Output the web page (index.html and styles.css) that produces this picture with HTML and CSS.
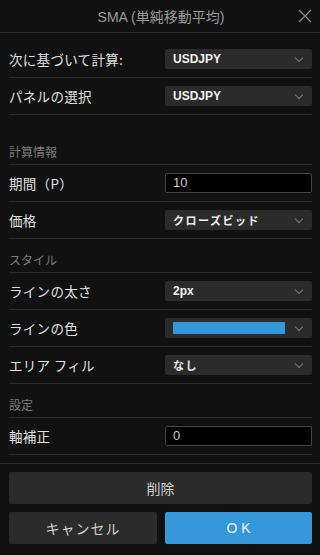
FILE: index.html
```html
<!DOCTYPE html>
<html lang="ja">
<head>
    <meta charset="UTF-8">
    <meta name="viewport" content="width=device-width, initial-scale=1.0">
    <title>SMA (単純移動平均)</title>
    <link rel="stylesheet" href="styles.css">
</head>
<body>
    <div class="kopf">
        <span class="titel">SMA (単純移動平均)</span>
        <svg class="zu" width="14" height="14" viewBox="0 0 14 14"><path d="M1 1L13 13M13 1L1 13" stroke="#8a8a8a" stroke-width="1.3" fill="none"/></svg>
    </div>
    <div class="inhalt">
        <div class="zeile">
            <label>次に基づいて計算:</label>
            <div class="wahl"><span class="fett">USDJPY</span><i class="pfeil"></i></div>
        </div>
        <div class="zeile">
            <label>パネルの選択</label>
            <div class="wahl"><span class="fett">USDJPY</span><i class="pfeil"></i></div>
        </div>
        <div class="abschnitt erster">計算情報</div>
        <div class="zeile">
            <label>期間（P）</label>
            <div class="feld">10</div>
        </div>
        <div class="zeile">
            <label>価格</label>
            <div class="wahl"><span class="jp">クローズビッド</span><i class="pfeil"></i></div>
        </div>
        <div class="abschnitt">スタイル</div>
        <div class="zeile">
            <label>ラインの太さ</label>
            <div class="wahl"><span class="fett">2px</span><i class="pfeil"></i></div>
        </div>
        <div class="zeile">
            <label>ラインの色</label>
            <div class="wahl"><span class="farbe"></span><i class="pfeil"></i></div>
        </div>
        <div class="zeile">
            <label>エリア フィル</label>
            <div class="wahl"><span class="jp">なし</span><i class="pfeil"></i></div>
        </div>
        <div class="abschnitt">設定</div>
        <div class="zeile">
            <label>軸補正</label>
            <div class="feld">0</div>
        </div>
    </div>
    <div class="fuss">
        <button class="knopf loeschen">削除</button>
        <div class="paar">
            <button class="knopf abbrechen">キャンセル</button>
            <button class="knopf ok">OK</button>
        </div>
    </div>
</body>
</html>
```

FILE: styles.css
```css
body{
    margin:0;
    background:#111111;
    font-family: "Noto Sans CJK JP", "Liberation Sans", sans-serif;
    color:#dedede;
    width:320px;
    height:555px;
    overflow:hidden;
}
.kopf{
    position: relative;
    height:32px;
    border-bottom:1px solid #2a2a2a;
    display:flex;
    align-items:center;
    justify-content:center;
}
.titel{
    font-family: "Liberation Sans", "Noto Sans CJK JP", sans-serif;
    font-size:14px;
    color:#9a9a9a;
    margin-left:2px;
}
.zu{
    position:absolute;
    right:8px;
    top:9px;
}
.inhalt{
    padding:8px 8px 8px 9px;
    border-bottom:1px solid #2a2a2a;
}
.zeile{
    display:flex;
    align-items:center;
    padding:8px 0;
    border-bottom:1px solid #2a2a2a;
}
label{
    width:156px;
    font-size:13.5px;
    line-height:20px;
    color:#e0e0e0;
    letter-spacing:0.3px;
}
.wahl{
    width:147px;
    height:20px;
    background:#2b2b2b;
    border-radius:2px;
    display:flex;
    align-items:center;
    padding-left:8px;
    box-sizing:border-box;
    position:relative;
}
.fett{
    font-family: "Liberation Sans", sans-serif;
    font-weight:bold;
    font-size:12px;
    color:#f2f2f2;
}
.jp{
    font-size:11px;
    font-weight:bold;
    letter-spacing:1.5px;
    color:#eeeeee;
}
.farbe{
    width:112px;
    height:12px;
    background:#3498db;
}
.pfeil{
    position:absolute;
    right:10px;
    top:6px;
    width:5px;
    height:5px;
    border-right:1px solid #7a7a7a;
    border-bottom:1px solid #7a7a7a;
    transform:rotate(45deg);
}
.feld{
    width:147px;
    height:20px;
    box-sizing:border-box;
    background:#000;
    border:1px solid #454545;
    border-radius:2px;
    font-family: "Liberation Sans", sans-serif;
    font-size:13px;
    line-height:18px;
    padding-left:7px;
    color:#cfcfcf;
}
.abschnitt{
    height:34px;
    box-sizing:border-box;
    padding-top:13px;
    font-size:12px;
    line-height:16px;
    color:#7c7c7c;
    border-bottom:1px solid #2a2a2a;
}
.abschnitt.erster{
    height:50px;
    padding-top:29px;
}
.fuss{
    padding:8px 8px 0 9px;
    display:flex;
    flex-direction:column;
    gap:8px;
}
.paar{
    display:flex;
    gap:8px;
}
.knopf{
    border:none;
    border-radius:2px;
    height:32px;
    font-family: "Noto Sans CJK JP", sans-serif;
    font-size:14px;
    color:#cfcfcf;
    background:#2b2b2b;
    padding:0;
}
.loeschen{
    width:303px;
}
.abbrechen{
    width:148px;
    letter-spacing:1px;
}
.ok{
    width:147px;
    background:#3498db;
    color:#f5f5f5;
    letter-spacing:4px;
    text-indent:4px;
    font-family: "Liberation Sans", sans-serif;
}
```
